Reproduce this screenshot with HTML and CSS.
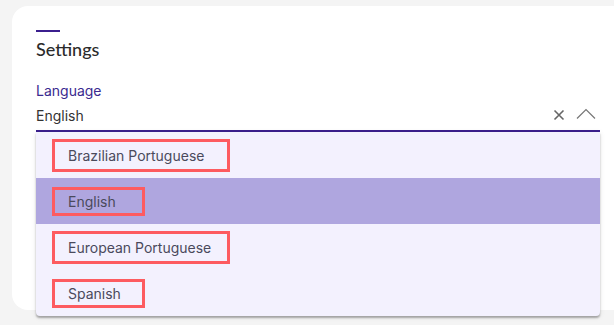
FILE: index.html
```html
<!DOCTYPE html>
<html lang="en">
<head>
    <meta charset="UTF-8">
    <title>Settings</title>
    <link rel="stylesheet" href="styles.css">
</head>
<body>
    <div class="settings-card">
        <div class="accent"></div>
        <h2 class="settings-title">Settings</h2>

        <div class="select-field">
            <label class="select-label">Language</label>
            <div class="select-control">
                <span class="select-value">English</span>
                <span class="select-icons">
                    <svg class="icon-clear" width="12" height="12" viewBox="0 0 12 12">
                        <path d="M1.5 1.5 L10.5 10.5 M10.5 1.5 L1.5 10.5" stroke="#666" stroke-width="1.6" fill="none"/>
                    </svg>
                    <svg class="icon-chevron" width="20" height="12" viewBox="0 0 20 12">
                        <path d="M1 10.5 L10 1.5 L19 10.5" stroke="#777" stroke-width="1.2" fill="none"/>
                    </svg>
                </span>
            </div>

            <ul class="select-menu">
                <li class="option"><span class="option-box wide">Brazilian Portuguese</span></li>
                <li class="option selected"><span class="option-box">English</span></li>
                <li class="option"><span class="option-box wide">European Portuguese</span></li>
                <li class="option"><span class="option-box">Spanish</span></li>
            </ul>
        </div>
    </div>
</body>
</html>
```

FILE: styles.css
```css
html, body {
    margin: 0;
    padding: 0;
    overflow: hidden;
}

body {
    font-family: 'Inter', 'Liberation Sans', sans-serif;
    background-color: #f4f4f4;
    width: 614px;
    height: 325px;
    padding: 6px 0 0 12px;
    box-sizing: border-box;
}

.settings-card {
    background-color: #fff;
    border-radius: 16px 0 0 16px;
    width: 602px;
    height: 304px;
    padding: 24px 0 0 24px;
    box-sizing: border-box;
}

.accent {
    width: 24px;
    height: 2px;
    background-color: #3b1f8e;
}

.settings-title {
    margin: 7px 0 0;
    font-family: 'Lato', 'Inter', sans-serif;
    font-weight: 500;
    font-size: 18px;
    line-height: 20px;
    color: #2b2b2b;
}

.select-field {
    position: relative;
    width: 564px;
    margin-top: 23px;
}

.select-label {
    display: block;
    font-size: 14px;
    line-height: 18px;
    color: #3b2a8f;
}

.select-control {
    display: flex;
    align-items: center;
    justify-content: space-between;
    height: 24px;
    padding-bottom: 3px;
    border-bottom: 2px solid #3b1f8e;
    margin-top: 3px;
}

.select-value {
    font-size: 14px;
    color: #333;
}

.select-icons {
    display: flex;
    align-items: center;
    gap: 11px;
    padding-right: 4px;
}

.icon-chevron {
    margin-top: -3px;
}

.select-menu {
    position: absolute;
    left: 0;
    top: 50px;
    width: 564px;
    margin: 0;
    padding: 0;
    list-style: none;
    background-color: #f3f1fe;
    border-radius: 0 0 4px 4px;
    box-shadow: 0 2px 2px rgba(0,0,0,0.3), 0 1px 6px rgba(0,0,0,0.08);
}

.option {
    height: 46px;
    display: flex;
    align-items: center;
    padding-left: 16px;
    font-size: 14px;
    color: #4a4a5c;
}

.option.selected {
    background-color: #afa6df;
}

.option-box {
    box-sizing: border-box;
    width: 93px;
    height: 29px;
    line-height: 23px;
    border: 3px solid #fd5b60;
    padding-left: 13px;
}

.option-box.wide {
    width: 178px;
    height: 33px;
    line-height: 27px;
}
```
